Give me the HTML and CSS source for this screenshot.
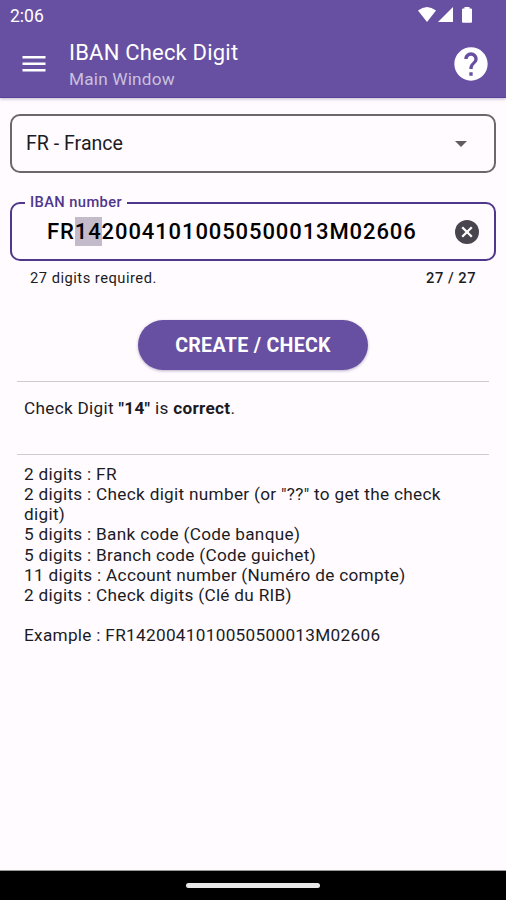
FILE: index.html
```html
<!DOCTYPE html>
<html lang="en">
<head>
<meta charset="utf-8">
<title>IBAN Check Digit</title>
<link rel="stylesheet" href="styles.css">
</head>
<body>
<header class="header">
  <div class="status">
    <span class="clock">2:06</span>
    <svg class="status-icons" width="56" height="18" viewBox="0 0 56 18" fill="#fff">
      <path d="M0 3.6Q9 -3.6 18 3.6L9 15Z"/>
      <path d="M35 0V15H20Z"/>
      <path d="M46.500 0h5v1.500h1.500a1 1 0 0 1 1 1v12.300a1 1 0 0 1-1 1h-8a1 1 0 0 1-1-1v-12.300a1 1 0 0 1 1-1h1.500z"/>
    </svg>
  </div>
  <div class="toolbar">
    <svg class="menu" width="24" height="18" viewBox="0 0 24 18" fill="#fff"><path d="M.5 1h23v2.400H.5zM.5 7.500h23v2.400H.5zM.5 14h23v2.400H.5z"/></svg>
    <div class="titles">
      <h1 class="title">IBAN Check Digit</h1>
      <div class="subtitle">Main Window</div>
    </div>
    <svg class="help" width="40" height="40" viewBox="0 0 24 24" fill="#fff"><path d="M12 2C6.480 2 2 6.480 2 12s4.480 10 10 10 10-4.480 10-10S17.520 2 12 2zm1 17h-2v-2h2v2zm2.070-7.750l-.9.920C13.450 12.900 13 13.500 13 15h-2v-.5c0-1.100.45-2.100 1.170-2.830l1.240-1.260c.37-.36.59-.86.59-1.410 0-1.100-.9-2-2-2s-2 .9-2 2H8c0-2.210 1.790-4 4-4s4 1.790 4 4c0 .88-.36 1.680-.93 2.250z"/></svg>
  </div>
</header>
<main class="content">
  <div class="field select">
    <span class="country">FR - France</span>
    <svg class="arrow" width="12" height="6" viewBox="0 0 12 6" fill="#5f5d62"><path d="M0 0h12L6 6z"/></svg>
  </div>
  <div class="field iban">
    <span class="label">IBAN number</span>
    <span class="number">FR<span class="selected">14</span>2004101005050­0013M02606</span>
    <svg class="clear" width="24" height="24" viewBox="0 0 24 24"><circle cx="12" cy="12" r="12" fill="#48454e"/><path d="M7.200 7.200l9.600 9.600M16.800 7.200l-9.600 9.600" stroke="#fff" stroke-width="2.300"/></svg>
  </div>
  <div class="helper"><span>27 digits required.</span><span class="counter">27 / 27</span></div>
  <button class="check">CREATE / CHECK</button>
  <section class="result">Check Digit <b>"14"</b> is <b>correct</b>.</section>
  <section class="format">2 digits : FR<br>2 digits : Check digit number (or "??" to get the check digit)<br>5 digits : Bank code (Code banque)<br>5 digits : Branch code (Code guichet)<br>11 digits : Account number (Numéro de compte)<br>2 digits : Check digits (Clé du RIB)<br><br>Example : FR1420041010050500013M02606</section>
</main>
<footer class="navbar"><div class="handle"></div></footer>
</body>
</html>
```
FILE: styles.css
```css
* { box-sizing: border-box; }
body {
  margin: 0;
  height: 900px;
  display: flex;
  flex-direction: column;
  background: #fffbff;
  color: #1c1b1f;
  font-family: Roboto, "Liberation Sans", sans-serif;
  overflow: hidden;
}
.header {
  height: 98px;
  background: #6750a2;
  border-bottom: 1px solid #58419a;
  color: #fff;
  box-shadow: 0 1px 3px rgba(80, 60, 120, .35);
}
.status {
  height: 30px;
  padding: 7px 30px 0 10px;
  display: flex;
  justify-content: space-between;
}
.clock { font-size: 17.5px; line-height: 18px; }
.status-icons { margin-right: 2px; }
.toolbar { display: flex; padding-left: 22px; }
.menu { margin-top: 25px; }
.titles { flex: 1; padding: 9px 0 0 23px; }
.title { margin: 0; font-size: 22px; font-weight: 400; line-height: 28px; letter-spacing: .2px; }
.subtitle { font-size: 17.2px; line-height: 24px; color: #cac0de; letter-spacing: .2px; }
.help { margin: 14px 15px 0 0; }
.content { flex: 1; padding: 16px 10px 0; }
.field {
  height: 59px;
  border: 2px solid #6a676d;
  border-radius: 10px;
  display: flex;
  align-items: center;
  justify-content: space-between;
}
.select { padding: 0 27px 0 14px; }
.country { font-size: 19.6px; }
.iban {
  position: relative;
  margin-top: 29px;
  padding: 0 15px 0 35px;
  border-color: #4f378b;
}
.label {
  position: absolute;
  left: 13px;
  top: -12px;
  padding: 0 5px;
  background: #fffbff;
  color: #4f378b;
  font-size: 14.7px;
  font-weight: 500;
  line-height: 20px;
  letter-spacing: .4px;
}
.number { font-size: 22px; font-weight: 500; line-height: 29px; letter-spacing: .9px; color: #000; }
.selected { display: inline-block; background: #c3bbc9; }
.helper {
  display: flex;
  justify-content: space-between;
  padding: 7px 20px 0;
  font-size: 14.7px;
  line-height: 20px;
  letter-spacing: .5px;
}
.counter { font-weight: 500; }
.check {
  display: block;
  width: 230px;
  height: 50px;
  margin: 32px auto 11px 128px;
  padding: 0;
  border: 0;
  border-radius: 25px;
  background: #6750a2;
  color: #fff;
  font: 700 19.6px Roboto, sans-serif;
  letter-spacing: .3px;
  box-shadow: 0 1px 3px rgba(80, 60, 120, .4);
}
.result, .format {
  margin: 0 7px;
  padding: 0 7px;
  border-top: 1px solid #cfcbd1;
  font-size: 17.2px;
  letter-spacing: .3px;
}
.result { height: 73px; padding-top: 16px; line-height: 20px; }
.result b { font-weight: 700; }
.format { padding-top: 9px; line-height: 20.15px; }
.navbar {
  height: 30px;
  padding-top: 12px;
  background: #000;
  border-top: 1px solid #999;
}
.handle { width: 134px; height: 5px; margin: 0 auto; border-radius: 3px; background: #e8e8e8; }
```
